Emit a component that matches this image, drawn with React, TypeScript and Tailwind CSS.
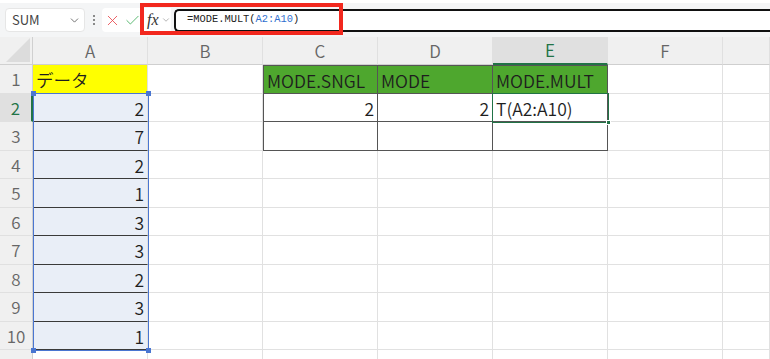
import { X, Check, ChevronDown } from "lucide-react";

const COLS = ["A", "B", "C", "D", "E", "F", ""];
const ROWS = [1, 2, 3, 4, 5, 6, 7, 8, 9, 10, 11];
const DATA = [2, 7, 2, 1, 3, 3, 2, 3, 1];

const font = "font-['Noto_Sans_CJK_JP','Noto_Sans',sans-serif]";

type CellProps = {
  row: number;
  col: number;
};

const Cell = ({ row, col }: CellProps) => {
  const base = "border-r border-b text-[17.5px] font-[350] leading-none text-[#1e1e1e] flex items-center px-[3px] pt-[2px]";
  const grid = "border-[#e1e1e1]";

  if (col === 0) {
    if (row === 1) return <div className={`${base} ${grid} bg-[#ffff00]`}>データ</div>;
    if (row >= 2 && row <= 10) {
      return (
        <div className={`${base} border-r-[#e1e1e1] border-b-[#3a3a3a] justify-end bg-[#e9eef7]`}>
          {DATA[row - 2]}
        </div>
      );
    }
  }
  if (col >= 2 && col <= 4 && row <= 3) {
    const tbl = `border-[#555] ${col === 2 ? "border-l" : ""} ${row === 1 ? "border-t" : ""}`;
    if (row === 1) {
      const label = ["MODE.SNGL", "MODE", "MODE.MULT"][col - 2];
      return <div className={`${base} ${tbl} bg-[#4ea72e]`}>{label}</div>;
    }
    if (row === 2) {
      if (col === 4) return <div className={`${base} ${tbl}`}>T(A2:A10)</div>;
      return <div className={`${base} ${tbl} justify-end`}>2</div>;
    }
    return <div className={`${base} ${tbl}`} />;
  }
  return <div className={`${base} ${grid}`} />;
};

const Toolbar = () => (
  <div className="relative h-[37px] bg-[#f4f5f6] border-t-[3px] border-t-white flex items-center">
    <div className="ml-[5px] w-[80px] h-[24px] bg-white rounded-[4px] border border-[#e6e6e6] flex items-center pl-[6px] pr-[3px] text-[13px] text-[#444]">
      <span className="flex-1">SUM</span>
      <ChevronDown size={13} strokeWidth={1.5} className="text-[#555]" />
    </div>
    <div className="w-[17px] flex flex-col items-center gap-[2px]">
      <span className="w-[2px] h-[2px] bg-[#666] rounded-full" />
      <span className="w-[2px] h-[2px] bg-[#666] rounded-full" />
      <span className="w-[2px] h-[2px] bg-[#666] rounded-full" />
    </div>
    <div className="w-[41px] h-[24px] bg-white rounded-l-[4px] flex items-center justify-center gap-[3px]">
      <X size={17} strokeWidth={1.2} className="text-[#e8474c]" />
      <Check size={17} strokeWidth={1.2} className="text-[#3fae5a]" />
    </div>
    <div className="w-[28px] h-[24px] bg-white flex items-center pl-[4px] gap-[2px]">
      <span className="font-['Liberation_Serif',serif] italic text-[16px] text-[#333] leading-none">fx</span>
      <ChevronDown size={10} strokeWidth={1.5} className="text-[#888]" />
    </div>
    <div className="ml-[3px] flex-1 h-[23px] bg-white border-y-2 border-l-2 border-[#111] rounded-l-[5px] flex items-center pl-[11px] font-['Liberation_Mono',monospace] text-[10.4px] text-[#222]">
      =MODE.MULT(<span className="text-[#2f6fcf]">A2:A10</span>)
    </div>
    <div className="absolute left-[140px] top-0 w-[203px] h-[32px] border-4 border-[#f2281e]" />
  </div>
);

export default function App() {
  return (
    <div className={`w-[770px] h-[359px] overflow-hidden bg-white ${font}`}>
      <Toolbar />
      <div className="relative grid grid-cols-[33px_repeat(6,115px)_1fr] grid-rows-[28px_repeat(11,28.5px)]">
        <div className="relative bg-[#f0f0f0] border-r border-b border-[#d0d0d0]">
          <div className="absolute right-[2px] bottom-[2px] w-0 h-0 border-l-[24px] border-l-transparent border-b-[24px] border-b-[#dcdcdc]" />
        </div>
        {COLS.map((c, i) => (
          <div
            key={c + i}
            className={`flex items-center justify-center text-[17px] font-[350] border-b border-r ${
              i === 4
                ? "bg-[#e0e0e0] text-[#217346] border-b-[#217346] border-b-2"
                : "bg-[#f0f0f0] text-[#666] border-b-[#cfcfcf]"
            } border-r-[#e0e0e0]`}
          >
            {c}
          </div>
        ))}
        {ROWS.map((r) => (
          <Row key={r} r={r} />
        ))}
        {/* range highlight A2:A10 */}
        <div className="absolute left-[33px] top-[56px] w-[116px] h-[258px] border-[1.5px] border-[#4a76d1] pointer-events-none">
          <span className="absolute -left-[3px] -top-[3px] w-[5px] h-[5px] bg-[#4a76d1]" />
          <span className="absolute -right-[3px] -top-[3px] w-[5px] h-[5px] bg-[#4a76d1]" />
          <span className="absolute -left-[3px] -bottom-[3px] w-[5px] h-[5px] bg-[#4a76d1]" />
          <span className="absolute -right-[3px] -bottom-[3px] w-[5px] h-[5px] bg-[#4a76d1]" />
        </div>
        {/* active cell E2 */}
        <div className="absolute left-[492px] top-[55.5px] w-[117px] h-[30px] border-[1.5px] border-[#217346] pointer-events-none">
          <span className="absolute -right-[3px] -bottom-[3px] w-[5px] h-[5px] bg-[#217346] border border-white" />
        </div>
      </div>
    </div>
  );
}

const Row = ({ r }: { r: number }) => (
  <>
    <div
      className={`flex items-center justify-center text-[17px] font-[350] border-b border-r ${
        r === 2
          ? "bg-[#e0e0e0] text-[#217346] border-r-2 border-r-[#217346]"
          : "bg-[#f0f0f0] text-[#666] border-r-[#cfcfcf]"
      } border-b-[#e0e0e0]`}
    >
      {r}
    </div>
    {COLS.map((_, c) => (
      <Cell key={c} row={r} col={c} />
    ))}
  </>
);
